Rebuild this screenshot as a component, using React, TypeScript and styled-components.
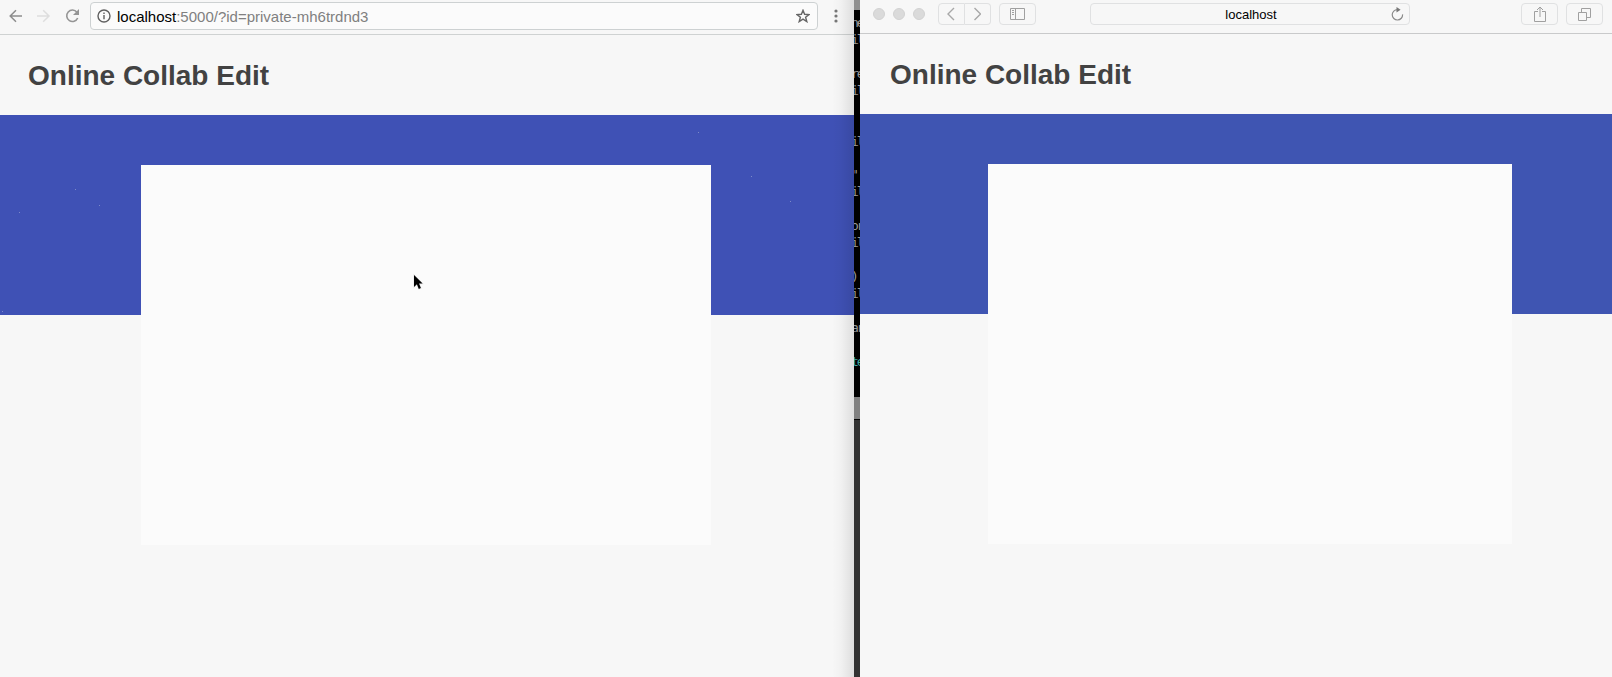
import React from 'react';
import styled, { createGlobalStyle } from 'styled-components';

const Global = createGlobalStyle`
  * { box-sizing: border-box; }
  html, body { margin: 0; padding: 0; overflow: hidden; }
  body { font-family: "Liberation Sans", Arial, sans-serif; background: #f7f7f7; }
  svg { display: block; flex: none; }
`;

const Desktop = styled.div`
  position: relative;
  display: flex;
  width: 1612px;
  height: 677px;
  overflow: hidden;
`;

const Window = styled.section<{ $width: number }>`
  display: flex;
  flex-direction: column;
  flex: none;
  width: ${p => p.$width}px;
  background: #f7f7f7;
`;

const ChromeBar = styled.div`
  display: flex;
  align-items: flex-start;
  height: 35px;
  padding: 2px 0 0 8px;
  border-bottom: 1px solid #cfd2d2;
`;

const ChromeIcon = styled.div<{ $gap: number }>`
  height: 28px;
  display: flex;
  align-items: center;
  margin-right: ${p => p.$gap}px;
`;

const Omnibox = styled.div`
  display: flex;
  align-items: center;
  flex: none;
  width: 728px;
  height: 28px;
  padding: 0 7px 0 6px;
  border: 1px solid #cdd1d2;
  border-radius: 4px;
  background: #fbfbfb;
`;

const Url = styled.span`
  flex: 1;
  margin-left: 6px;
  padding-top: 1px;
  font-size: 15px;
  line-height: 25px;
  color: #808080;
  white-space: nowrap;
`;

const Host = styled.span`
  color: #000;
`;

const SafariBar = styled.div`
  display: flex;
  align-items: flex-start;
  height: 34px;
  padding: 3px 0 0 13px;
  border-bottom: 1px solid #c9cacb;
`;

const Lights = styled.div`
  display: flex;
  align-items: center;
  gap: 8px;
  height: 22px;
  margin-right: 13px;
`;

const Light = styled.i`
  width: 12px;
  height: 12px;
  border-radius: 50%;
  background: #dadada;
  border: 1px solid #d2d2d2;
`;

const SafariButton = styled.div<{ $width: number; $gap: number; $side?: 'left' | 'right' }>`
  display: flex;
  align-items: center;
  justify-content: center;
  flex: none;
  width: ${p => p.$width}px;
  height: 22px;
  margin-right: ${p => p.$gap}px;
  border: 1px solid #e0e1e2;
  border-left-width: ${p => (p.$side === 'right' ? 0 : 1)}px;
  border-radius: ${p => (p.$side === 'left' ? '4px 0 0 4px' : p.$side === 'right' ? '0 4px 4px 0' : '4px')};
`;

const AddressField = styled.div`
  display: grid;
  grid-template-columns: 20px 1fr 18px;
  align-items: center;
  flex: none;
  width: 320px;
  height: 22px;
  margin-right: 111px;
  border: 1px solid #e0e1e2;
  border-radius: 4px;
`;

const Address = styled.span`
  grid-column: 2;
  padding-top: 1px;
  text-align: center;
  font-size: 13px;
  color: #000;
`;

const Header = styled.header<{ $indent: number }>`
  display: flex;
  align-items: center;
  height: 80px;
  padding: 2px 0 0 ${p => p.$indent}px;
`;

const Title = styled.h1`
  margin: 0;
  font-size: 28px;
  line-height: 32px;
  font-weight: 700;
  color: #424242;
  white-space: nowrap;
`;

const Page = styled.main<{ $band: string }>`
  display: flex;
  flex: 1;
  padding-top: 50px;
  background: linear-gradient(${p => p.$band}, ${p => p.$band}) top / 100% 200px no-repeat;
`;

const Editor = styled.div<{ $left: number; $width: number }>`
  width: ${p => p.$width}px;
  height: 380px;
  margin-left: ${p => p.$left}px;
  background: #fbfbfb;
`;

const EdgeShadow = styled.div`
  position: absolute;
  left: 832px;
  top: 0;
  width: 22px;
  height: 677px;
  background: linear-gradient(to right, transparent, rgba(0, 0, 0, 0.025) 40%, rgba(0, 0, 0, 0.1));
`;

const Terminal = styled.div`
  display: flex;
  flex-direction: column;
  flex: none;
  width: 6px;
  overflow: hidden;
  background: #333;
`;

const TerminalTitle = styled.div`
  height: 10px;
  background: #909090;
`;

const TerminalBody = styled.div`
  height: 387px;
  padding-top: 4px;
  background: #000;
`;

const TerminalLine = styled.div<{ $teal?: boolean }>`
  height: 16.95px;
  margin-left: -3px;
  font: 13px/17px "DejaVu Sans Mono", monospace;
  letter-spacing: -2px;
  color: ${p => (p.$teal ? '#3aa5a0' : '#989898')};
  white-space: pre;
`;

const TerminalFoot = styled.div`
  height: 23px;
  background: #808080;
  border-bottom: 1px solid #000;
`;

const Pointer = styled.svg`
  position: absolute;
  left: 412px;
  top: 273px;
`;

const LINES = ['ne', 'il', '', 're', 'il', '', '', 'il', '', '"', 'il', '', 'or', 'il', '', ')', 'il', '', 'ar', '', 'te'];

const Dot = ({ x, y }: { x: number; y: number }) => <rect x={x} y={y} width="1" height="1" />;

const Specks = styled.svg`
  position: absolute;
  left: 0;
  top: 115px;
  fill: #7c8ac8;
`;

export default function App() {
  return (
    <>
      <Global />
      <Desktop>
        <Window $width={854}>
          <ChromeBar>
            <ChromeIcon $gap={14}>
              <svg width="15" height="14" viewBox="0 0 15 14" fill="none" stroke="#8e8e8e" strokeWidth="1.5">
                <path d="M14 7H2.5M8 1.2L2.2 7L8 12.8" />
              </svg>
            </ChromeIcon>
            <ChromeIcon $gap={14}>
              <svg width="14" height="14" viewBox="0 0 14 14" fill="none" stroke="#dedede" strokeWidth="1.5">
                <path d="M0 7H12M6.2 1.2L12 7L6.2 12.8" />
              </svg>
            </ChromeIcon>
            <ChromeIcon $gap={10}>
              <svg width="15" height="14" viewBox="0 0 15 14">
                <path d="M11.9 3.2A5.7 5.7 0 1 0 12.7 9" fill="none" stroke="#959595" strokeWidth="1.6" />
                <path d="M14 0V6H8Z" fill="#959595" />
              </svg>
            </ChromeIcon>
            <Omnibox>
              <svg width="14" height="14" viewBox="0 0 14 14" fill="none" stroke="#606060" strokeWidth="1.4">
                <circle cx="7" cy="7" r="6" />
                <path d="M7 6V10.3M7 3.4V4.9" />
              </svg>
              <Url><Host>localhost</Host>:5000/?id=private-mh6trdnd3</Url>
              <svg width="14" height="14" viewBox="0 0 14 14" fill="none" stroke="#666" strokeWidth="1.4">
                <path d="M7 1.3L8.6 5.3L13 5.6L9.6 8.3L10.8 12.6L7 10.2L3.2 12.6L4.4 8.3L1 5.6L5.4 5.3Z" />
              </svg>
            </Omnibox>
            <ChromeIcon $gap={0}>
              <svg width="30" height="14" viewBox="0 0 30 14" fill="#777">
                <circle cx="18" cy="2" r="1.6" />
                <circle cx="18" cy="7" r="1.6" />
                <circle cx="18" cy="12" r="1.6" />
              </svg>
            </ChromeIcon>
          </ChromeBar>
          <Header $indent={28}><Title>Online Collab Edit</Title></Header>
          <Page $band="#3f51b5"><Editor $left={141} $width={570} /></Page>
        </Window>

        <Terminal>
          <TerminalTitle />
          <TerminalBody>
            {LINES.map((t, i) => (
              <TerminalLine key={i} $teal={t === 'te'}>{t}</TerminalLine>
            ))}
          </TerminalBody>
          <TerminalFoot />
        </Terminal>

        <Window $width={752}>
          <SafariBar>
            <Lights><Light /><Light /><Light /></Lights>
            <SafariButton $width={27} $gap={0} $side="left">
              <svg width="9" height="14" viewBox="0 0 9 14" fill="none" stroke="#a8a8a8" strokeWidth="1.4">
                <path d="M7 1L1 7L7 13" />
              </svg>
            </SafariButton>
            <SafariButton $width={26} $gap={8} $side="right">
              <svg width="7" height="14" viewBox="0 0 7 14" fill="none" stroke="#a8a8a8" strokeWidth="1.4">
                <path d="M0.5 1L6.5 7L0.5 13" />
              </svg>
            </SafariButton>
            <SafariButton $width={37} $gap={54}>
              <svg width="15" height="12" viewBox="0 0 15 12" fill="none" stroke="#a0a0a0">
                <path d="M0.5 0.5H14.5V11.5H0.5ZM5.5 0.5V11.5M2 2.5H4M2 4.5H4M2 6.5H4" />
              </svg>
            </SafariButton>
            <AddressField>
              <Address>localhost</Address>
              <svg width="13" height="15" viewBox="0 0 13 15">
                <path d="M6.6 2.6A5.2 5.2 0 1 0 11.6 7.4" fill="none" stroke="#8a8a8a" strokeWidth="1.2" />
                <path d="M5.5 0L9.6 2.8L5.5 5.4Z" fill="#777" />
              </svg>
            </AddressField>
            <SafariButton $width={37} $gap={8}>
              <svg width="12" height="16" viewBox="0 0 12 16" fill="none" stroke="#a0a0a0">
                <path d="M4 5.5H0.5V15.5H11.5V5.5H8M6 11V1M3 4L6 1L9 4" />
              </svg>
            </SafariButton>
            <SafariButton $width={37} $gap={0}>
              <svg width="13" height="13" viewBox="0 0 13 13" fill="none" stroke="#a0a0a0">
                <path d="M0.5 4.5H8.5V12.5H0.5ZM3.5 4V0.5H12.5V9.5H9" />
              </svg>
            </SafariButton>
          </SafariBar>
          <Header $indent={30}><Title>Online Collab Edit</Title></Header>
          <Page $band="#3f55b2"><Editor $left={128} $width={524} /></Page>
        </Window>

        <EdgeShadow />
        <Specks width="854" height="200">
          <Dot x={698} y={17} /><Dot x={751} y={61} /><Dot x={790} y={86} />
          <Dot x={75} y={74} /><Dot x={99} y={90} /><Dot x={19} y={97} /><Dot x={2} y={196} />
        </Specks>
        <Pointer width="14" height="20" viewBox="0 0 14 20">
          <path d="M2 2V14L4.9 11.3L6.8 16L8.9 15.1L7 10.6H10.6Z" fill="#000" stroke="#e8e8e8" strokeWidth="1.2" paintOrder="stroke" />
        </Pointer>
      </Desktop>
    </>
  );
}
